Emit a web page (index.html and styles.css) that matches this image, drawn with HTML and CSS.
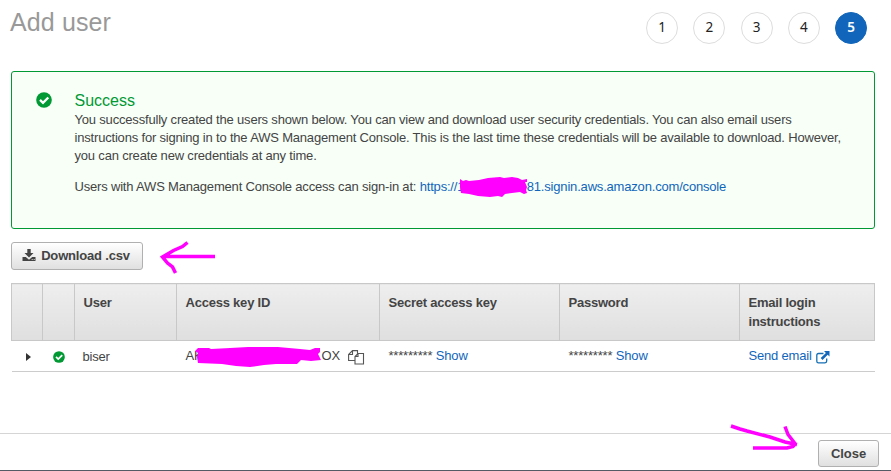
FILE: index.html
```html
<!DOCTYPE html>
<html lang="en">
<head>
<meta charset="utf-8">
<title>Add user</title>
<link rel="stylesheet" href="styles.css">
</head>
<body>
<svg class="defs" width="0" height="0">
  <symbol id="check" viewBox="0 0 16 16"><circle cx="8" cy="8" r="7.8" fill="#009933"/><path d="M4 7.900 7 10.800 12.300 5.500" fill="none" stroke="#fff" stroke-width="2.300"/></symbol>
</svg>
<div class="page">
  <header class="top">
    <h1>Add user</h1>
    <ol class="steps"><li>1</li><li>2</li><li>3</li><li>4</li><li class="active">5</li></ol>
  </header>
  <section class="alert">
    <svg class="alert-icon" width="16" height="16"><use href="#check"/></svg>
    <div class="alert-body">
      <h2>Success</h2>
      <p>You successfully created the users shown below. You can view and download user security credentials. You can also email users<br>instructions for signing in to the AWS Management Console. This is the last time these credentials will be available to download. However,<br>you can create new credentials at any time.</p>
      <p class="signin">Users with AWS Management Console access can sign-in at: <a>https://1<span class="gap-account"></span>81.signin.aws.amazon.com/console</a></p>
    </div>
  </section>
  <button class="btn download"><svg width="14" height="14" viewBox="0 0 14 14"><path d="M5.300 0h3.400v4h2.800L7 8.500 2.500 4h2.800zM.5 8h3.300L7 10.700 10.200 8h3.300v4H.5z" fill="#444"/><path d="M9.700 10.500h1M11.700 10.500h1" stroke="#ddd"/></svg><span>Download .csv</span></button>
  <table>
    <colgroup><col class="c1"><col class="c2"><col class="c3"><col class="c4"><col class="c5"><col class="c6"><col class="c7"></colgroup>
    <thead><tr><th></th><th></th><th>User</th><th>Access key ID</th><th>Secret access key</th><th>Password</th><th>Email login instructions</th></tr></thead>
    <tbody><tr>
      <td class="icon-cell"><svg class="caret" width="5" height="8" viewBox="0 0 5 8"><path d="M0 0 5 4 0 8z" fill="#333"/></svg></td>
      <td class="icon-cell"><svg class="row-check" width="12" height="12"><use href="#check"/></svg></td>
      <td class="user">biser</td>
      <td><div class="cell">AK<span class="gap-key"></span>OX<svg class="copy" width="17" height="15" viewBox="0 0 17 15"><g fill="#fff" stroke="#555" stroke-width="1.100"><path d="M4.500.6H9.500V10.500H.6V4.500zM4.500.6V4.500H.6"/><path d="M10 3.500h5.500v10.500h-8.500V6.500zM10 3.500v3h-3"/></g></svg></div></td>
      <td><span class="stars">*********</span> <a>Show</a></td>
      <td><span class="stars">*********</span> <a>Show</a></td>
      <td><div class="cell"><a>Send email</a><svg class="external" width="14" height="13" viewBox="0 0 14 13"><path d="M7.500 2.500h-5Q.8 2.500.8 4.200v6Q.8 11.800 2.500 11.800h6.500q1.700 0 1.700-1.700V7.500" fill="none" stroke="#146eb4" stroke-width="1.300"/><path d="M8 0h5.500v5.500L11.700 3.700 6.500 8.900 4.700 7.100 9.900 1.900z" fill="#1166bb"/></svg></div></td>
    </tr></tbody>
  </table>
  <footer><button class="btn close">Close</button></footer>
</div>
<svg class="ink" width="891" height="471" viewBox="0 0 891 471">
  <path class="blot" d="M460 179l3 2 3-1 3 1 10-1 9-2 12-1 4 1 8-1 6 1 4 2 5-1v3h-2l2 5-1 3 1 3-3 1-4-2-8 1-7 1-3 3-4-1-8 1-12-1-9-2-8-1-1-6z"/>
  <path class="blot" d="M198 348H209L211 349 230 348 248 347H278L300 349 310 350 315 348H320V352L318 354 321 360 311 361 301 360 297 364 276 364 264 365 250 367 236 366 222 364 198 363 197 357 198 353 195 351Z"/>
  <g fill="none" stroke="#f0f" stroke-width="3.500">
    <path d="M215 256.500H163M187.500 242.500l-5 4-9 4-11 6.500 5 6 5 4 3 6"/>
    <path d="M731 426l9 3 7 2 23 6 15 5 12 2.500M785 426.500l3 8 7 9-2 3-6 1.500h-34"/>
  </g>
</svg>
</body>
</html>
```
FILE: styles.css
```css
* { box-sizing: border-box; }
body { margin: 0; background: #fff; color: #444; font: 13px/18px "Liberation Sans", Arial, sans-serif; letter-spacing: -0.185px; overflow: hidden; }
.defs { position: absolute; }
.page { height: 471px; border-bottom: 1px solid #545b64; display: flex; flex-direction: column; position: relative; }
.top { height: 71px; padding: 0 24px 0 10px; display: flex; justify-content: space-between; }
h1 { margin: 8px 0 0; font-size: 25px; line-height: 28px; font-weight: 400; color: #999; letter-spacing: 0.120px; }
.steps { display: flex; gap: 15.250px; list-style: none; margin: 12px 0 0; padding: 0; }
.steps li { width: 32px; height: 32px; border: 1px solid #ddd; border-radius: 50%; text-align: center; font: 13.500px/28px "Noto Sans", sans-serif; letter-spacing: 0; color: #222; }
.steps .active { background: #1166bb; border-color: #1166bb; color: #fff; font-weight: 600; }
.alert { height: 158px; margin: 0 16px 0 11px; padding: 20px 0 0 24px; border: 1px solid #009933; border-radius: 3px; background: #f7fff7; display: flex; }
.alert-icon { flex: none; margin-right: 22.500px; }
.alert-body { white-space: nowrap; }
h2 { margin: 0; font-size: 16px; line-height: 18px; font-weight: 400; color: #009933; letter-spacing: 0; }
h2 + p { margin-top: 1px; }
p { margin: 0; }
.signin { margin-top: 13px; }
a { color: #1166bb; }
.gap-account { display: inline-block; width: 62.500px; }
.btn { font: bold 13px/18px "Liberation Sans", Arial, sans-serif; letter-spacing: -0.18px; color: #444; border: 1px solid #b0b0b0; border-radius: 3px; background: linear-gradient(#fff, #e0e0e0); display: flex; align-items: center; justify-content: center; padding: 0; }
.download { width: 132px; height: 28px; margin: 13px 0 0 11px; padding-right: 2px; gap: 5px; }
table { width: 864px; margin: 13px 0 0 11px; border-collapse: collapse; table-layout: fixed; }
.c1 { width: 31px; } .c2 { width: 32px; } .c3 { width: 102px; } .c4 { width: 203px; }
.c5, .c6 { width: 180px; } .c7 { width: 135px; }
th { height: 57px; padding: 9px 8px 0 8.500px; text-align: left; vertical-align: top; line-height: 19px; letter-spacing: -0.22px; border: 1px solid #c8c8c8; background: linear-gradient(#eee, #dfdfdf); }
td { height: 31px; padding: 0 0 0 9px; border-bottom: 1px solid #ccc; vertical-align: middle; white-space: nowrap; }
td.icon-cell { padding: 0; line-height: 0; }
.caret { margin: 2px 0 0 14px; }
.row-check { margin: 2px 0 0 10px; }
td.user { padding: 1px 0 0 8px; }
.cell { display: flex; align-items: center; }
.gap-key { width: 119px; }
.copy { margin: 3px 0 0 8px; }
.external { margin: 2px 0 0 4px; }
footer { margin-top: auto; height: 37px; border-top: 1px solid #d5d5d5; display: flex; justify-content: flex-end; padding: 6px 12px 0 0; }
.close { width: 61px; height: 27px; letter-spacing: -0.050px; }
.ink { position: absolute; left: 0; top: 0; pointer-events: none; }
.blot { fill: #f0f; }
```
